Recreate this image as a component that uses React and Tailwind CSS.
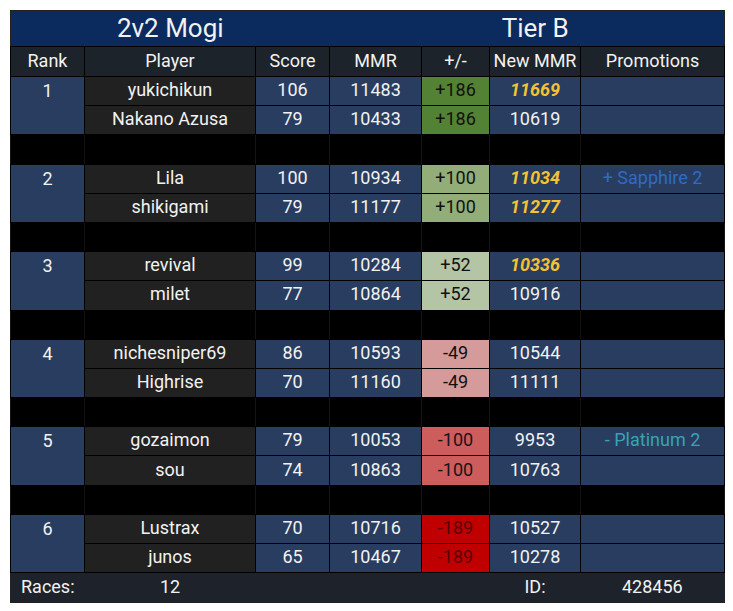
import React from "react";

const groups = [
  {
    rank: 1,
    deltaBg: "bg-[#548235]",
    deltaText: "text-[#111]",
    players: [
      { name: "yukichikun", score: 106, mmr: 11483, delta: "+186", newMmr: 11669, gold: true },
      { name: "Nakano Azusa", score: 79, mmr: 10433, delta: "+186", newMmr: 10619 },
    ],
  },
  {
    rank: 2,
    deltaBg: "bg-[#93ad78]",
    deltaText: "text-[#111]",
    players: [
      { name: "Lila", score: 100, mmr: 10934, delta: "+100", newMmr: 11034, gold: true, promo: "+ Sapphire 2", promoColor: "text-[#2f6bc4]" },
      { name: "shikigami", score: 79, mmr: 11177, delta: "+100", newMmr: 11277, gold: true },
    ],
  },
  {
    rank: 3,
    deltaBg: "bg-[#b4c5a5]",
    deltaText: "text-[#111]",
    players: [
      { name: "revival", score: 99, mmr: 10284, delta: "+52", newMmr: 10336, gold: true },
      { name: "milet", score: 77, mmr: 10864, delta: "+52", newMmr: 10916 },
    ],
  },
  {
    rank: 4,
    deltaBg: "bg-[#d59b9b]",
    deltaText: "text-[#111]",
    players: [
      { name: "nichesniper69", score: 86, mmr: 10593, delta: "-49", newMmr: 10544 },
      { name: "Highrise", score: 70, mmr: 11160, delta: "-49", newMmr: 11111 },
    ],
  },
  {
    rank: 5,
    deltaBg: "bg-[#cd5c5c]",
    deltaText: "text-[#151515]",
    players: [
      { name: "gozaimon", score: 79, mmr: 10053, delta: "-100", newMmr: 9953, promo: "- Platinum 2", promoColor: "text-[#3aa3b2]" },
      { name: "sou", score: 74, mmr: 10863, delta: "-100", newMmr: 10763 },
    ],
  },
  {
    rank: 6,
    deltaBg: "bg-[#c00000]",
    deltaText: "text-[#5a0000]",
    players: [
      { name: "Lustrax", score: 70, mmr: 10716, delta: "-189", newMmr: 10527 },
      { name: "junos", score: 65, mmr: 10467, delta: "-189", newMmr: 10278 },
    ],
  },
];

const headers = ["Rank", "Player", "Score", "MMR", "+/-", "New MMR", "Promotions"];

const cell = "border border-black text-center p-0 leading-none pb-[2px]";
const blue = "bg-[#283d5f]";

export default function App() {
  return (
    <div className="bg-white p-[10px] w-[733px] h-[611px]" style={{ fontFamily: "Roboto, sans-serif" }}>
      <table className="table-fixed w-[714px] text-[18px] leading-none text-[#f2f2f2] border border-[#222]">
        <colgroup>
          <col className="w-[74px]" />
          <col className="w-[171px]" />
          <col className="w-[74px]" />
          <col className="w-[92px]" />
          <col className="w-[68px]" />
          <col className="w-[91px]" />
          <col className="w-[144px]" />
        </colgroup>
        <tbody>
          {/* Title */}
          <tr className="h-[36px] bg-[#0b2a5e] text-[26px] leading-none">
            <td colSpan={3} className="text-center p-0 pb-[2px]">2v2 Mogi</td>
            <td colSpan={4} className="text-center p-0 pb-[2px] pl-[17px]">Tier B</td>
          </tr>

          {/* Header */}
          <tr className="h-[30px] bg-[#1d232b]">
            {headers.map((h) => (
              <td key={h} className={`${cell} border-[#0b0b0b]`}>{h}</td>
            ))}
          </tr>

          {groups.map((g, gi) => (
            <React.Fragment key={g.rank}>
              {g.players.map((p, pi) => (
                <tr key={p.name} className="h-[29.2px]">
                  {pi === 0 && (
                    <td rowSpan={2} className={`${cell} ${blue} align-top pt-[5px]`}>
                      {g.rank}
                    </td>
                  )}
                  <td className={`${cell} bg-[#212121]`}>{p.name}</td>
                  <td className={`${cell} ${blue}`}>{p.score}</td>
                  <td className={`${cell} ${blue}`}>{p.mmr}</td>
                  <td className={`${cell} ${g.deltaBg} ${g.deltaText}`}>{p.delta}</td>
                  <td className={`${cell} ${blue} ${p.gold ? "text-[#f4c232] font-bold italic" : ""}`}>
                    {p.newMmr}
                  </td>
                  <td className={`${cell} ${blue} ${p.promoColor || ""}`}>{p.promo || ""}</td>
                </tr>
              ))}
              {gi < groups.length - 1 && (
                <tr className="h-[29.2px] bg-black">
                  {headers.map((h) => (
                    <td key={h} className="border-y border-y-black border-x border-x-[#141414] p-0" />
                  ))}
                </tr>
              )}
            </React.Fragment>
          ))}

          {/* Footer */}
          <tr className="h-[30px] bg-[#1e232b]">
            <td className="text-center p-0 pb-[2px]">Races:</td>
            <td className="text-center p-0 pb-[2px]">12</td>
            <td className="p-0" />
            <td className="p-0" />
            <td className="p-0" />
            <td className="text-center p-0 pb-[2px]">ID:</td>
            <td className="text-center p-0 pb-[2px]">428456</td>
          </tr>
        </tbody>
      </table>
    </div>
  );
}
